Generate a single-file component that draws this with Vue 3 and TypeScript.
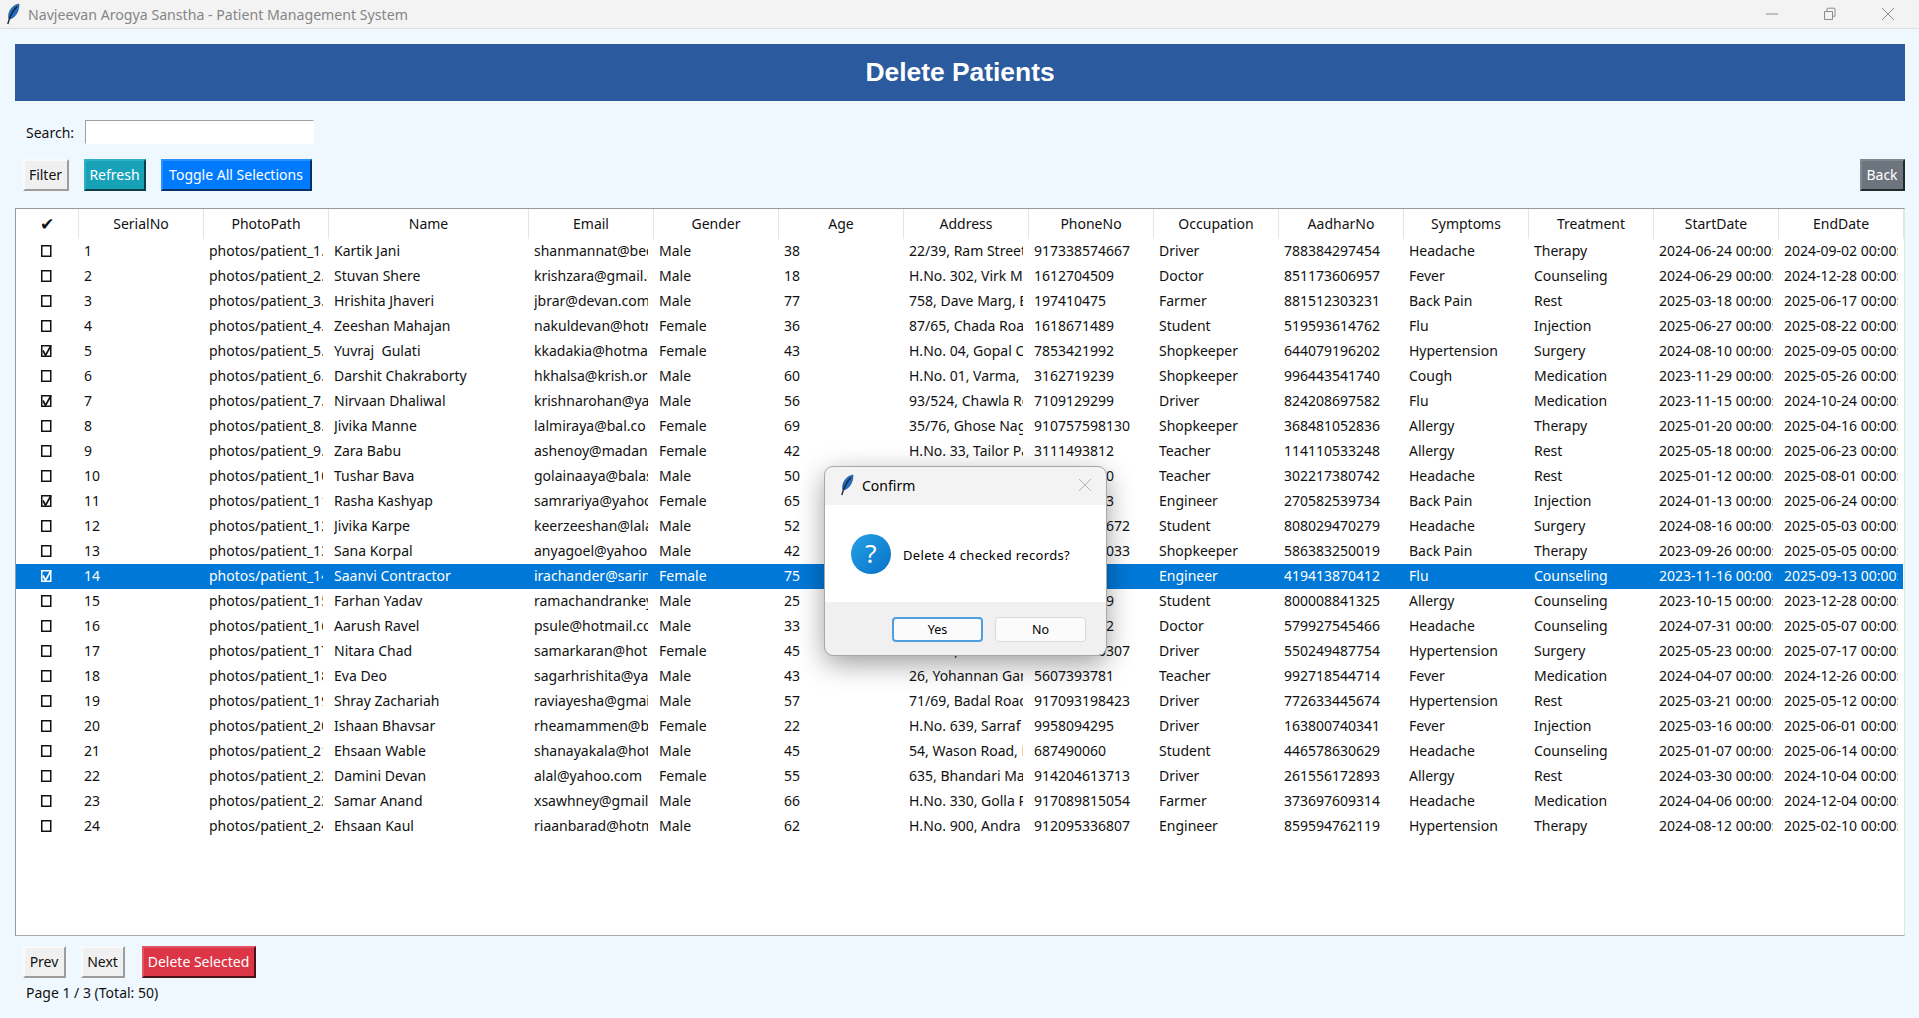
<template>
  <div class="window">
    <div class="titlebar">
      <svg class="feather" width="18" height="22" viewBox="0 0 18 22">
        <path d="M16 1C11 1.800 7 5.500 5.800 11c-.4 2-.3 3.800.2 5.200 4.800-1 8.300-5 9.500-10.500.4-1.800.6-3.400.5-4.700z" fill="#1f6fc4" stroke="#14457c" stroke-width=".6" />
        <path d="M14 3.500C10 7.500 7 12.500 4.800 21" fill="none" stroke="#1a2433" stroke-width="1.400" />
      </svg>
      <span class="app-title">Navjeevan Arogya Sanstha - Patient Management System</span>
      <div class="win-controls">
        <svg width="14" height="14" viewBox="0 0 14 14"><path d="M1 7h12" stroke="#8c8c8c" fill="none" /></svg>
        <svg width="14" height="14" viewBox="0 0 14 14"><path d="M1.500 4.500h8v8h-8zM4 4.500V2c0-.5.300-.8.800-.8h6.400c.5 0 .8.300.8.800v7.200h-2.400" stroke="#8c8c8c" fill="none" /></svg>
        <svg width="14" height="14" viewBox="0 0 14 14"><path d="M1 1l12 12M13 1L1 13" stroke="#8c8c8c" fill="none" /></svg>
      </div>
    </div>

    <div class="content">
      <div class="banner">Delete Patients</div>

      <div class="search-row">
        <label class="lbl">Search:</label>
        <input class="search-input" type="text" />
      </div>

      <div class="toolbar">
        <button class="tk-btn plain filter">Filter</button>
        <button class="tk-btn refresh">Refresh</button>
        <button class="tk-btn toggle">Toggle All Selections</button>
        <button class="tk-btn back">Back</button>
      </div>

      <div class="table-wrap">
        <table class="grid">
          <colgroup>
            <col v-for="c in columns" :key="c.name" :style="{ width: c.width + 'px' }" />
          </colgroup>
          <thead>
            <tr>
              <th v-for="c in columns" :key="c.name" :class="{ 'check-head': c.name === '✔' }">{{ c.name }}</th>
            </tr>
          </thead>
          <tbody>
            <tr v-for="row in rows" :key="row[0]" :class="{ selected: row[0] === '14' }">
              <td class="check-cell">
                <svg width="14" height="14" viewBox="0 0 14 14" class="box">
                  <rect x="2.750" y="1.750" width="9" height="10.500" fill="none" stroke="currentColor" stroke-width="1.500" />
                  <path v-if="checked.includes(row[0])" d="M4 6.500l2.500 5 5.500-10" fill="none" stroke="currentColor" stroke-width="1.700" />
                </svg>
              </td>
              <td v-for="(val, i) in row" :key="i"><span class="cell">{{ val }}</span></td>
            </tr>
          </tbody>
        </table>
      </div>

      <div class="pager">
        <button class="tk-btn plain prev">Prev</button>
        <button class="tk-btn plain next">Next</button>
        <button class="tk-btn danger">Delete Selected</button>
      </div>
      <div class="page-info">Page 1 / 3 (Total: 50)</div>
    </div>

    <div class="dialog">
      <div class="dlg-title">
        <svg width="18" height="22" viewBox="0 0 18 22">
          <path d="M16 1C11 1.800 7 5.500 5.800 11c-.4 2-.3 3.800.2 5.200 4.800-1 8.300-5 9.500-10.500.4-1.800.6-3.400.5-4.700z" fill="#1f6fc4" stroke="#14457c" stroke-width=".6" />
          <path d="M14 3.500C10 7.500 7 12.500 4.800 21" fill="none" stroke="#1a2433" stroke-width="1.400" />
        </svg>
        <span class="dlg-caption">Confirm</span>
        <svg class="dlg-close" width="14" height="14" viewBox="0 0 14 14"><path d="M1 1l12 12M13 1L1 13" stroke="#b4b4b4" fill="none" /></svg>
      </div>
      <div class="dlg-body">
        <svg width="40" height="40" viewBox="0 0 40 40">
          <defs>
            <linearGradient id="q" x1="0" y1="0" x2="1" y2="1">
              <stop offset="0" stop-color="#27a0e6" />
              <stop offset="1" stop-color="#0672c8" />
            </linearGradient>
          </defs>
          <circle cx="20" cy="20" r="20" fill="url(#q)" />
          <text x="20" y="29" text-anchor="middle" class="q-mark">?</text>
        </svg>
        <span class="dlg-msg">Delete 4 checked records?</span>
      </div>
      <div class="dlg-foot">
        <button class="dlg-btn yes">Yes</button>
        <button class="dlg-btn">No</button>
      </div>
    </div>
  </div>
</template>

<script setup lang="ts">
const columns = [
  { name: '✔', width: 62 },
  { name: 'SerialNo', width: 125 },
  { name: 'PhotoPath', width: 125 },
  { name: 'Name', width: 200 },
  { name: 'Email', width: 125 },
  { name: 'Gender', width: 125 },
  { name: 'Age', width: 125 },
  { name: 'Address', width: 125 },
  { name: 'PhoneNo', width: 125 },
  { name: 'Occupation', width: 125 },
  { name: 'AadharNo', width: 125 },
  { name: 'Symptoms', width: 125 },
  { name: 'Treatment', width: 125 },
  { name: 'StartDate', width: 125 },
  { name: 'EndDate', width: 125 },
]

const checked = ['5', '7', '11', '14']

const rows: string[][] = [
  ['1', 'photos/patient_1.jpg', 'Kartik Jani', 'shanmannat@bedi.com', 'Male', '38', '22/39, Ram Street', '917338574667', 'Driver', '788384297454', 'Headache', 'Therapy', '2024-06-24 00:00:00', '2024-09-02 00:00:00'],
  ['2', 'photos/patient_2.jpg', 'Stuvan Shere', 'krishzara@gmail.com', 'Male', '18', 'H.No. 302, Virk Marg', '1612704509', 'Doctor', '851173606957', 'Fever', 'Counseling', '2024-06-29 00:00:00', '2024-12-28 00:00:00'],
  ['3', 'photos/patient_3.jpg', 'Hrishita Jhaveri', 'jbrar@devan.com', 'Male', '77', '758, Dave Marg, Erode', '197410475', 'Farmer', '881512303231', 'Back Pain', 'Rest', '2025-03-18 00:00:00', '2025-06-17 00:00:00'],
  ['4', 'photos/patient_4.jpg', 'Zeeshan Mahajan', 'nakuldevan@hotmail.com', 'Female', '36', '87/65, Chada Road', '1618671489', 'Student', '519593614762', 'Flu', 'Injection', '2025-06-27 00:00:00', '2025-08-22 00:00:00'],
  ['5', 'photos/patient_5.jpg', 'Yuvraj  Gulati', 'kkadakia@hotmail.com', 'Female', '43', 'H.No. 04, Gopal Chowk', '7853421992', 'Shopkeeper', '644079196202', 'Hypertension', 'Surgery', '2024-08-10 00:00:00', '2025-09-05 00:00:00'],
  ['6', 'photos/patient_6.jpg', 'Darshit Chakraborty', 'hkhalsa@krish.org', 'Male', '60', 'H.No. 01, Varma, Pune', '3162719239', 'Shopkeeper', '996443541740', 'Cough', 'Medication', '2023-11-29 00:00:00', '2025-05-26 00:00:00'],
  ['7', 'photos/patient_7.jpg', 'Nirvaan Dhaliwal', 'krishnarohan@yahoo.com', 'Male', '56', '93/524, Chawla Road', '7109129299', 'Driver', '824208697582', 'Flu', 'Medication', '2023-11-15 00:00:00', '2024-10-24 00:00:00'],
  ['8', 'photos/patient_8.jpg', 'Jivika Manne', 'lalmiraya@bal.co', 'Female', '69', '35/76, Ghose Nagar', '910757598130', 'Shopkeeper', '368481052836', 'Allergy', 'Therapy', '2025-01-20 00:00:00', '2025-04-16 00:00:00'],
  ['9', 'photos/patient_9.jpg', 'Zara Babu', 'ashenoy@madan', 'Female', '42', 'H.No. 33, Tailor Path', '3111493812', 'Teacher', '114110533248', 'Allergy', 'Rest', '2025-05-18 00:00:00', '2025-06-23 00:00:00'],
  ['10', 'photos/patient_10.jpg', 'Tushar Bava', 'golainaaya@balasubr.com', 'Male', '50', '', '9100000000', 'Teacher', '302217380742', 'Headache', 'Rest', '2025-01-12 00:00:00', '2025-08-01 00:00:00'],
  ['11', 'photos/patient_11.jpg', 'Rasha Kashyap', 'samrariya@yahoo.com', 'Female', '65', '', '9100000003', 'Engineer', '270582539734', 'Back Pain', 'Injection', '2024-01-13 00:00:00', '2025-06-24 00:00:00'],
  ['12', 'photos/patient_12.jpg', 'Jivika Karpe', 'keerzeeshan@lala', 'Male', '52', '', '910000000672', 'Student', '808029470279', 'Headache', 'Surgery', '2024-08-16 00:00:00', '2025-05-03 00:00:00'],
  ['13', 'photos/patient_13.jpg', 'Sana Korpal', 'anyagoel@yahoo', 'Male', '42', '', '910000000033', 'Shopkeeper', '586383250019', 'Back Pain', 'Therapy', '2023-09-26 00:00:00', '2025-05-05 00:00:00'],
  ['14', 'photos/patient_14.jpg', 'Saanvi Contractor', 'irachander@sarin', 'Female', '75', '', '910000000', 'Engineer', '419413870412', 'Flu', 'Counseling', '2023-11-16 00:00:00', '2025-09-13 00:00:00'],
  ['15', 'photos/patient_15.jpg', 'Farhan Yadav', 'ramachandrankeya@gmail.com', 'Male', '25', '', '9100000009', 'Student', '800008841325', 'Allergy', 'Counseling', '2023-10-15 00:00:00', '2023-12-28 00:00:00'],
  ['16', 'photos/patient_16.jpg', 'Aarush Ravel', 'psule@hotmail.com', 'Male', '33', '', '9100000002', 'Doctor', '579927545466', 'Headache', 'Counseling', '2024-07-31 00:00:00', '2025-05-07 00:00:00'],
  ['17', 'photos/patient_17.jpg', 'Nitara Chad', 'samarkaran@hotmail.com', 'Female', '45', '31/300, Bhatia Ghat', '910000000307', 'Driver', '550249487754', 'Hypertension', 'Surgery', '2025-05-23 00:00:00', '2025-07-17 00:00:00'],
  ['18', 'photos/patient_18.jpg', 'Eva Deo', 'sagarhrishita@yahoo.com', 'Male', '43', '26, Yohannan Ganj', '5607393781', 'Teacher', '992718544714', 'Fever', 'Medication', '2024-04-07 00:00:00', '2024-12-26 00:00:00'],
  ['19', 'photos/patient_19.jpg', 'Shray Zachariah', 'raviayesha@gmail.com', 'Male', '57', '71/69, Badal Road', '917093198423', 'Driver', '772633445674', 'Hypertension', 'Rest', '2025-03-21 00:00:00', '2025-05-12 00:00:00'],
  ['20', 'photos/patient_20.jpg', 'Ishaan Bhavsar', 'rheamammen@bora.com', 'Female', '22', 'H.No. 639, Sarraf Road', '9958094295', 'Driver', '163800740341', 'Fever', 'Injection', '2025-03-16 00:00:00', '2025-06-01 00:00:00'],
  ['21', 'photos/patient_21.jpg', 'Ehsaan Wable', 'shanayakala@hotmail.com', 'Male', '45', '54, Wason Road, Pune', '687490060', 'Student', '446578630629', 'Headache', 'Counseling', '2025-01-07 00:00:00', '2025-06-14 00:00:00'],
  ['22', 'photos/patient_22.jpg', 'Damini Devan', 'alal@yahoo.com', 'Female', '55', '635, Bhandari Marg', '914204613713', 'Driver', '261556172893', 'Allergy', 'Rest', '2024-03-30 00:00:00', '2024-10-04 00:00:00'],
  ['23', 'photos/patient_23.jpg', 'Samar Anand', 'xsawhney@gmail', 'Male', '66', 'H.No. 330, Golla Path', '917089815054', 'Farmer', '373697609314', 'Headache', 'Medication', '2024-04-06 00:00:00', '2024-12-04 00:00:00'],
  ['24', 'photos/patient_24.jpg', 'Ehsaan Kaul', 'riaanbarad@hotmail.com', 'Male', '62', 'H.No. 900, Andra', '912095336807', 'Engineer', '859594762119', 'Hypertension', 'Therapy', '2024-08-12 00:00:00', '2025-02-10 00:00:00'],
]
</script>

<style>
html, body {
  margin: 0;
  height: 100%;
  overflow: hidden;
}
</style>

<style scoped>
.window {
  position: relative;
  display: flex;
  flex-direction: column;
  height: 1018px;
  background: #f0f8ff;
  font-family: "Noto Sans", "Open Sans", sans-serif;
  font-size: 14px;
  color: #111;
}
.titlebar {
  display: flex;
  align-items: center;
  height: 29px;
  box-sizing: border-box;
  padding-left: 3px;
  background: #f3f3f3;
  border-bottom: 1px solid #dcdfe2;
}
.feather {
  margin-right: 7px;
}
.app-title {
  font-size: 14.15px;
  color: #858585;
}
.win-controls {
  display: flex;
  gap: 44px;
  margin-left: auto;
  margin-right: 24px;
}
.content {
  display: flex;
  flex-direction: column;
  padding: 15px 14px 0 15px;
}
.banner {
  height: 57px;
  line-height: 57px;
  text-align: center;
  background: #2b5a9e;
  color: #fff;
  font-family: "Liberation Sans", Arial, sans-serif;
  font-weight: 700;
  font-size: 26.4px;
}
.search-row {
  display: flex;
  align-items: center;
  gap: 11px;
  margin-top: 19px;
  padding-left: 11px;
  height: 24px;
}
.search-input {
  width: 229px;
  height: 24px;
  box-sizing: border-box;
  background: #fff;
  border: 1px solid #fff;
  border-top-color: #a0a0a0;
  border-left-color: #a0a0a0;
  outline: none;
}
.toolbar {
  display: flex;
  margin-top: 15px;
  padding-left: 8px;
}
.tk-btn {
  height: 32px;
  box-sizing: border-box;
  padding: 0 1px 2px 0;
  border: 2px solid;
  font-family: inherit;
  font-size: 14px;
  color: #fff;
}
.plain {
  background: #f0f0f0;
  color: #111;
  border-color: #fafafa #9c9c9c #9c9c9c #fafafa;
}
.filter { width: 46px; margin-right: 15px; }
.refresh {
  width: 62px;
  margin-right: 15px;
  background: #17a2b8;
  border-color: #2fb0c4 #0b3f48 #0b3f48 #2fb0c4;
}
.toggle {
  width: 151px;
  background: #007bff;
  border-color: #2a90ff #003268 #003268 #2a90ff;
}
.back {
  width: 45px;
  margin-left: auto;
  background: #6c757d;
  border-color: #80888f #24282b #24282b #80888f;
}
.table-wrap {
  height: 728px;
  margin-top: 17px;
  box-sizing: border-box;
  background: #fff;
  border: 1px solid #9a9a9a;
  border-bottom-color: #a8a8a8;
  border-right-color: #e4e4e4;
  overflow: hidden;
}
.grid {
  table-layout: fixed;
  width: 1887px;
  border-collapse: collapse;
}
.grid th {
  height: 30px;
  box-sizing: border-box;
  padding: 0 0 2px 1px;
  font-weight: 400;
  background: #fff;
  border-right: 1px solid #e5e5e5;
}
.grid th.check-head {
  padding-left: 0;
  font-size: 17px;
}
.grid td {
  height: 25px;
  box-sizing: border-box;
  padding: 0 5px 2px 6px;
  white-space: nowrap;
}
.cell {
  display: block;
  overflow: hidden;
  white-space: pre;
}
.grid td.check-cell {
  padding: 0 2px 2px 0;
}
.box {
  display: block;
  margin: 0 auto;
}
tr.selected td {
  background: #0078d7;
  color: #fff;
}
.pager {
  display: flex;
  margin-top: 10px;
  padding-left: 8px;
}
.prev { width: 43px; margin-right: 15px; }
.next { width: 44px; margin-right: 17px; }
.danger {
  width: 114px;
  background: #dc3545;
  border-color: #e25563 #4a1218 #4a1218 #e25563;
}
.page-info {
  margin-top: 5px;
  padding-left: 11px;
}
.dialog {
  position: absolute;
  left: 825px;
  top: 467px;
  width: 281px;
  height: 188px;
  display: flex;
  flex-direction: column;
  background: #f0f0f0;
  border-radius: 8px;
  overflow: hidden;
  outline: 1px solid #a8a8a8;
  box-shadow: 0 8px 28px rgba(0, 0, 0, 0.4);
  font-family: "Noto Sans", sans-serif;
  color: #000;
}
.dlg-title {
  display: flex;
  align-items: center;
  height: 38px;
  padding: 0 0 2px 12px;
  box-sizing: border-box;
  background: #f3f3f3;
}
.dlg-caption {
  margin-left: 7px;
  font-size: 14px;
}
.dlg-close {
  margin-left: auto;
  margin-right: 14px;
}
.dlg-body {
  display: flex;
  align-items: center;
  gap: 12px;
  height: 97px;
  padding-left: 26px;
  background: #fff;
}
.q-mark {
  fill: #fff;
  font-family: "Noto Sans", sans-serif;
  font-size: 26px;
}
.dlg-msg {
  font-size: 13px;
  letter-spacing: 0.33px;
  padding-top: 2px;
}
.dlg-foot {
  display: flex;
  justify-content: flex-end;
  align-items: center;
  gap: 12px;
  flex: 1;
  padding: 2px 20px 0 0;
  box-sizing: border-box;
}
.dlg-btn {
  width: 91px;
  height: 25px;
  padding: 0;
  box-sizing: border-box;
  background: #fbfbfb;
  border: 1px solid #dadada;
  border-radius: 4px;
  font-family: inherit;
  font-size: 12.5px;
  color: #000;
}
.yes {
  border: 2px solid #4f9fe0;
}
</style>
